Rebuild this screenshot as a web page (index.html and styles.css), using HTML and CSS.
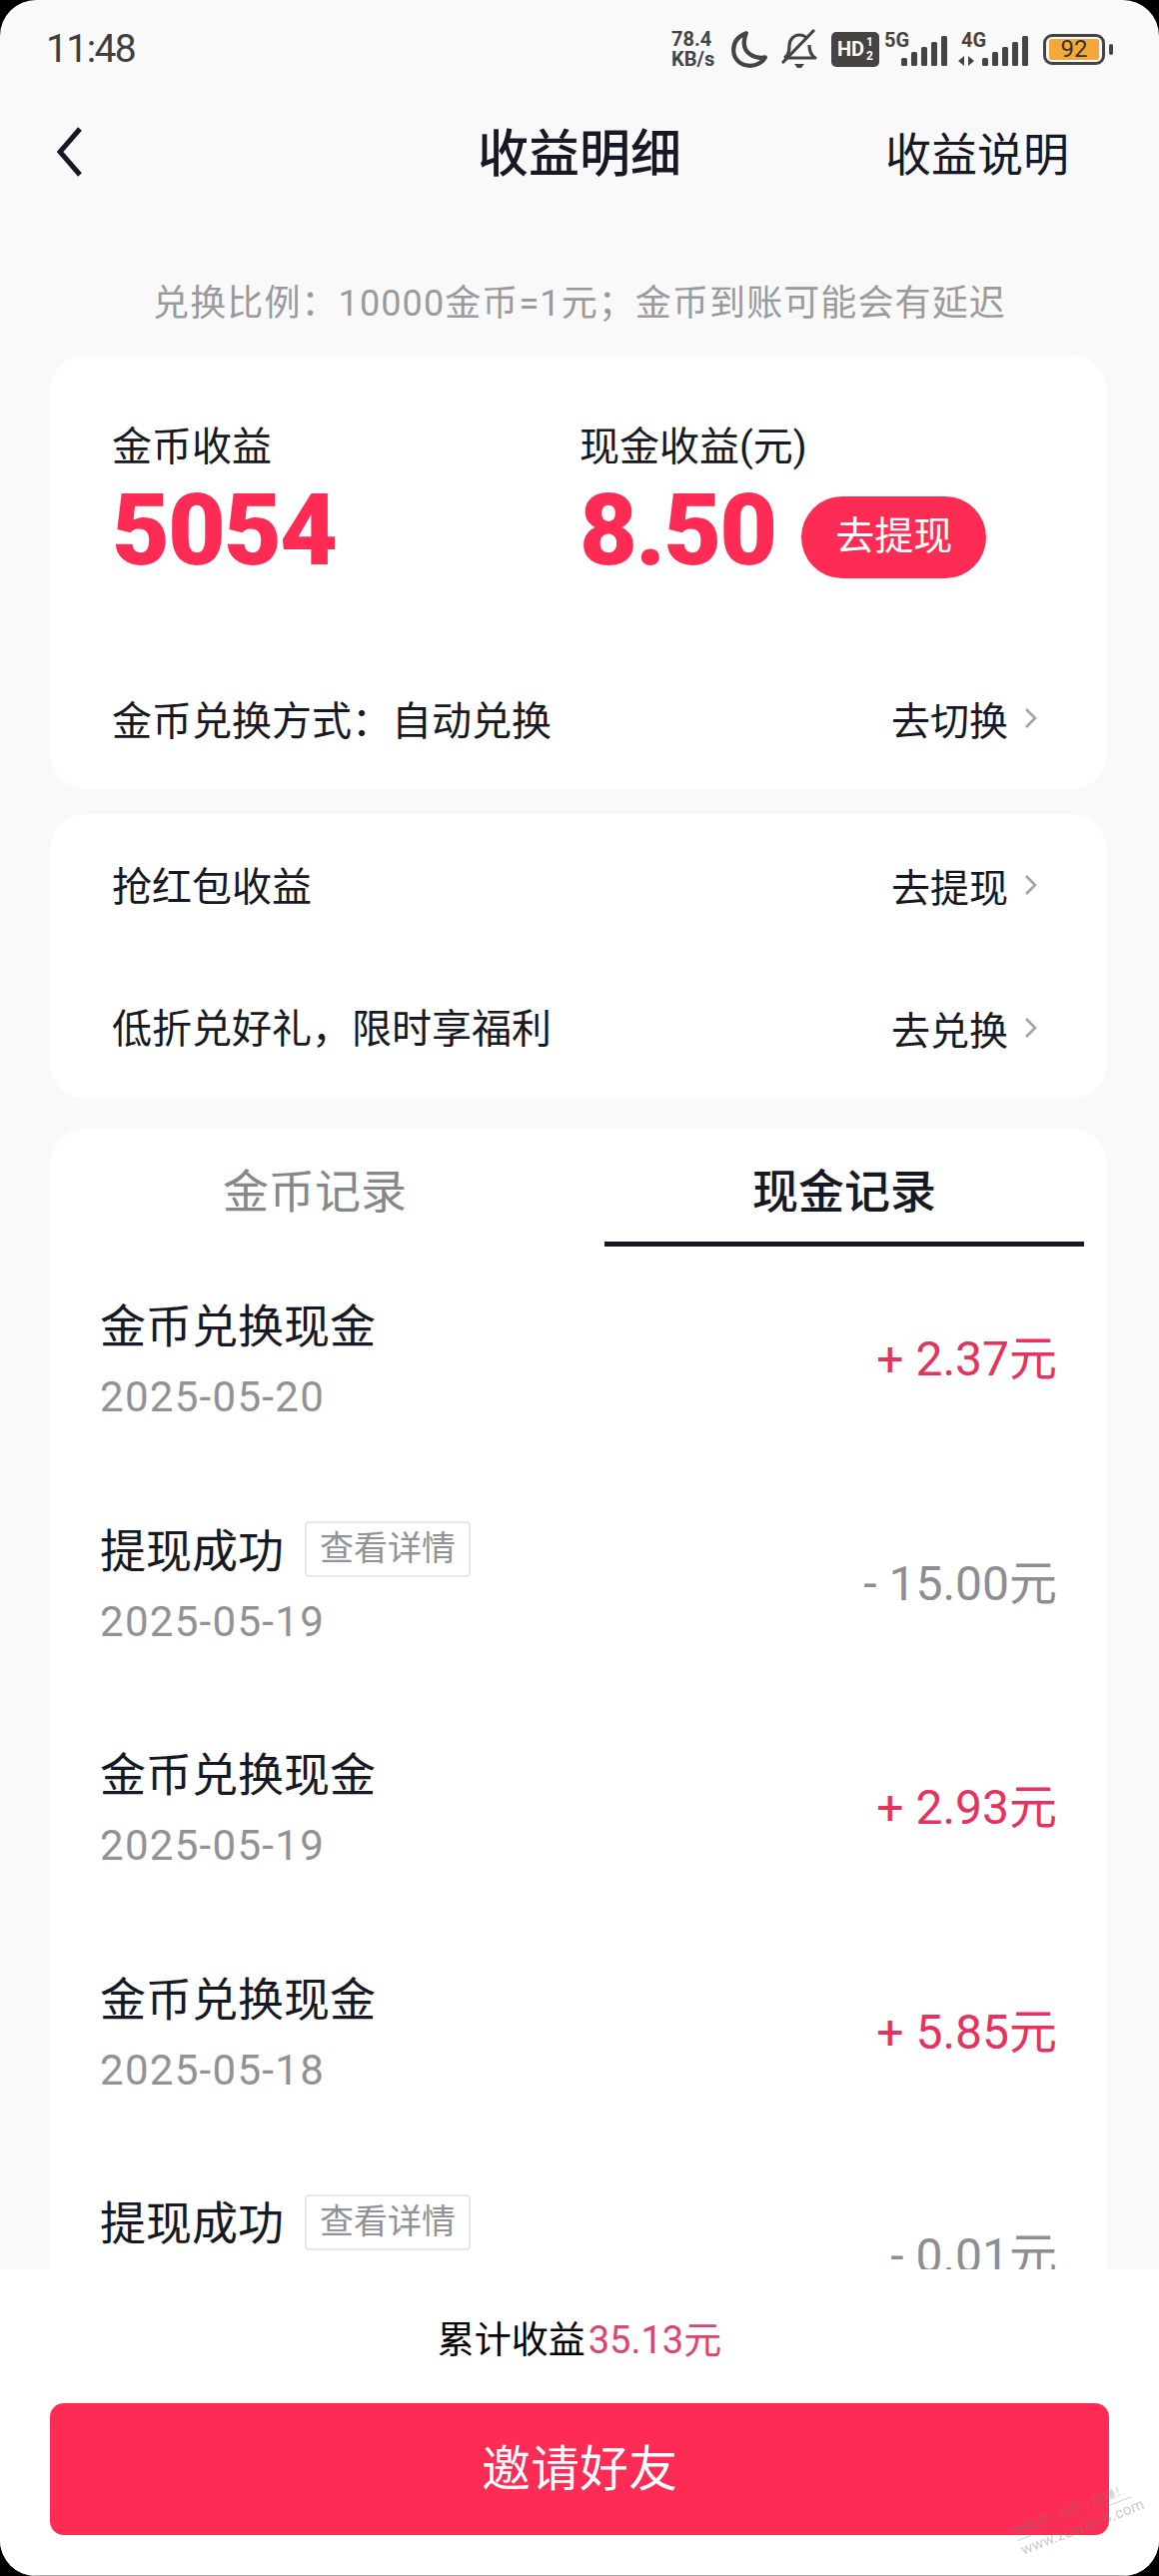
FILE: index.html
```html
<!DOCTYPE html>
<html lang="zh-CN">
<head>
    <meta charset="UTF-8">
    <meta name="viewport" content="width=device-width, initial-scale=1.0">
    <title>收益明细</title>
    <link rel="stylesheet" href="styles.css">
</head>
<body>
    <div class="screen">
        <div class="status-bar">
            <span class="time">11:48</span>
            <div class="status-icons">
                <span class="speed">78.4<br>KB/s</span>
                <svg class="icon-moon" width="38" height="38" viewBox="0 0 36 36">
                    <path d="M15 3 C7 6 3 12 3 19 C3 28 10 34 19 34 C25 34 31 30 33 26 C23 28 13 22 13 12 C13 9 14 6 15 3 Z" fill="none" stroke="#444" stroke-width="4" stroke-linejoin="round"/>
                </svg>
                <svg class="icon-bell" width="38" height="40" viewBox="0 0 38 40">
                    <path d="M4 29 C9 26 9 21 9 17 C9 10 14 6 19 6 C22 6 25 7 27 10 M29 16 C29 21 30 26 35 29 L4 29" fill="none" stroke="#444" stroke-width="3.2" stroke-linejoin="round"/>
                    <path d="M3 33 L33 2" stroke="#444" stroke-width="3.2" stroke-linecap="round"/>
                    <path d="M14 35 H24 L21 39 H17 Z" fill="#444"/>
                </svg>
                <span class="hd-badge">HD<span class="hd-frac">1<br>2</span></span>
                <div class="signal signal-5g">
                    <span class="net">5G</span>
                    <svg width="46" height="30" viewBox="0 0 46 30">
                        <g fill="#444">
                            <rect x="0" y="22" width="6" height="8" rx="1.5"/>
                            <rect x="10" y="16" width="6" height="14" rx="1.5"/>
                            <rect x="20" y="11" width="6" height="19" rx="1.5"/>
                            <rect x="30" y="6" width="6" height="24" rx="1.5"/>
                            <rect x="40" y="0" width="6" height="30" rx="1.5"/>
                        </g>
                    </svg>
                </div>
                <div class="signal signal-4g">
                    <span class="net">4G</span>
                    <svg class="updown" width="16" height="10" viewBox="0 0 16 10">
                        <path d="M6 0 V10 L0 5 Z M10 0 V10 L16 5 Z" fill="#444"/>
                    </svg>
                    <svg width="46" height="30" viewBox="0 0 46 30">
                        <g fill="#444">
                            <rect x="0" y="22" width="6" height="8" rx="1.5"/>
                            <rect x="10" y="16" width="6" height="14" rx="1.5"/>
                            <rect x="20" y="11" width="6" height="19" rx="1.5"/>
                            <rect x="30" y="6" width="6" height="24" rx="1.5"/>
                            <rect x="40" y="0" width="6" height="30" rx="1.5"/>
                        </g>
                    </svg>
                </div>
                <div class="battery">
                    <span class="battery-level">92</span>
                </div>
                <span class="battery-nub"></span>
            </div>
        </div>

        <div class="nav">
            <svg class="back" width="26" height="50" viewBox="0 0 26 50">
                <path d="M23 2 L3 25 L23 48" fill="none" stroke="#161823" stroke-width="5"/>
            </svg>
            <span class="nav-title">收益明细</span>
            <span class="nav-link">收益说明</span>
        </div>

        <p class="notice">兑换比例：10000金币=1元；金币到账可能会有延迟</p>

        <div class="card summary-card">
            <div class="earnings">
                <div class="earning">
                    <div class="earning-label">金币收益</div>
                    <div class="earning-value">5054</div>
                </div>
                <div class="earning">
                    <div class="earning-label">现金收益(元)</div>
                    <div class="earning-line">
                        <div class="earning-value">8.50</div>
                        <span class="withdraw">去提现</span>
                    </div>
                </div>
            </div>
            <div class="link-row">
                <span>金币兑换方式：自动兑换</span>
                <span class="link-action">去切换<svg class="arrow" width="13" height="22" viewBox="0 0 13 22"><path d="M2 2 L11 11 L2 20" fill="none" stroke="#a3a3a6" stroke-width="2.6"/></svg></span>
            </div>
        </div>

        <div class="card links-card">
            <div class="link-row">
                <span>抢红包收益</span>
                <span class="link-action">去提现<svg class="arrow" width="13" height="22" viewBox="0 0 13 22"><path d="M2 2 L11 11 L2 20" fill="none" stroke="#a3a3a6" stroke-width="2.6"/></svg></span>
            </div>
            <div class="link-row">
                <span>低折兑好礼，限时享福利</span>
                <span class="link-action">去兑换<svg class="arrow" width="13" height="22" viewBox="0 0 13 22"><path d="M2 2 L11 11 L2 20" fill="none" stroke="#a3a3a6" stroke-width="2.6"/></svg></span>
            </div>
        </div>

        <div class="card records-card">
            <div class="tabs">
                <div class="tab">金币记录</div>
                <div class="tab active">现金记录</div>
            </div>

            <div class="record">
                <div>
                    <div class="record-title">金币兑换现金</div>
                    <div class="record-date">2025-05-20</div>
                </div>
                <div class="amount plus">+ 2.37元</div>
            </div>
            <div class="record">
                <div>
                    <div class="record-title">提现成功<span class="detail-tag">查看详情</span></div>
                    <div class="record-date">2025-05-19</div>
                </div>
                <div class="amount">- 15.00元</div>
            </div>
            <div class="record">
                <div>
                    <div class="record-title">金币兑换现金</div>
                    <div class="record-date">2025-05-19</div>
                </div>
                <div class="amount plus">+ 2.93元</div>
            </div>
            <div class="record">
                <div>
                    <div class="record-title">金币兑换现金</div>
                    <div class="record-date">2025-05-18</div>
                </div>
                <div class="amount plus">+ 5.85元</div>
            </div>
            <div class="record">
                <div>
                    <div class="record-title">提现成功<span class="detail-tag">查看详情</span></div>
                    <div class="record-date"></div>
                </div>
                <div class="amount">- 0.01元</div>
            </div>
        </div>

        <div class="footer">
            <div class="total">累计收益<span class="total-value">35.13元</span></div>
            <div class="invite">邀请好友</div>
        </div>

        <div class="watermark">
            <div class="watermark-name">赚客吧，有你一起赚！</div>
            <div class="watermark-url">www.zuanke8.com</div>
        </div>
    </div>
</body>
</html>
```

FILE: styles.css
```css
* {
    margin: 0;
    padding: 0;
    box-sizing: border-box;
    font-family: Roboto, 'Noto Sans CJK SC', sans-serif;
}

body {
    background-color: #000;
    width: 1160px;
    height: 2579px;
    overflow: hidden;
}

.screen {
    position: relative;
    width: 1160px;
    height: 2579px;
    background-color: #f9f9fa;
    border-radius: 36px;
    overflow: hidden;
    color: #161823;
}

/* status bar */
.status-bar {
    height: 96px;
    padding: 2px 46px 0;
    display: flex;
    justify-content: space-between;
    align-items: center;
}

.time {
    font-size: 39px;
    color: #3f3f3f;
    letter-spacing: -1.6px;
}

.status-icons {
    display: flex;
    align-items: center;
    height: 40px;
}

.speed {
    width: 52px;
    font-size: 20px;
    line-height: 20px;
    font-weight: 700;
    color: #444;
}

.icon-moon {
    margin-left: 7px;
}

.icon-bell {
    margin-left: 12px;
}

.hd-badge {
    display: flex;
    align-items: center;
    justify-content: center;
    width: 48px;
    height: 35px;
    margin-left: 13px;
    background-color: #444;
    border-radius: 5px;
    color: #fff;
    font-size: 20px;
    font-weight: 700;
}

.hd-frac {
    font-size: 12px;
    line-height: 14px;
    margin-left: 2px;
}

.signal {
    position: relative;
    display: flex;
    align-items: flex-end;
    height: 34px;
}

.signal-5g {
    margin-left: 22px;
}

.signal-4g {
    margin-left: 35px;
}

.net {
    position: absolute;
    left: -17px;
    top: -1px;
    font-size: 20px;
    line-height: 18px;
    font-weight: 700;
    color: #444;
}

.signal-4g .net {
    left: -21px;
}

.updown {
    position: absolute;
    left: -24px;
    bottom: 0;
}

.battery {
    width: 62px;
    height: 31px;
    margin-left: 15px;
    padding: 2px 3px;
    border: 3px solid #444;
    border-radius: 9px;
}

.battery-level {
    display: block;
    width: 50px;
    height: 21px;
    background-color: #f4a83c;
    border-radius: 2px;
    text-align: center;
    font-size: 24px;
    line-height: 21px;
    color: #333;
}

.battery-nub {
    width: 4px;
    height: 11px;
    margin-left: 4px;
    background-color: #444;
    border-radius: 2px;
}

/* nav */
.nav {
    height: 112px;
    padding: 0 90px;
    display: grid;
    grid-template-columns: 1fr auto 1fr;
    align-items: center;
}

.back {
    margin-left: -33px;
}

.nav-title {
    margin-bottom: 5px;
    font-size: 51px;
    font-weight: 500;
}

.nav-link {
    justify-self: end;
    margin-bottom: 3px;
    font-size: 46px;
}

.notice {
    padding: 71px 0 26px;
    font-size: 36px;
    line-height: 50px;
    letter-spacing: 1.1px;
    text-align: center;
    color: #9a9a9e;
}

.card {
    margin: 0 52px 0 50px;
    background-color: #fff;
    border-radius: 36px;
}

/* top card */
.summary-card {
    height: 435px;
    padding-top: 68px;
}

.earnings {
    display: grid;
    grid-template-columns: 468px 1fr;
    padding-left: 62px;
    height: 225px;
}

.earning-label {
    font-size: 40px;
    line-height: 50px;
}

.earning-value {
    margin-top: 3px;
    font-size: 100px;
    line-height: 110px;
    font-weight: 900;
    letter-spacing: -2px;
    color: #fe2c55;
}

.earning-line {
    display: flex;
    align-items: center;
}

.withdraw {
    width: 185px;
    height: 82px;
    margin: 17px 0 0 26px;
    background-color: #fe2c55;
    border-radius: 41px;
    color: #fff;
    font-size: 39px;
    line-height: 80px;
    text-align: center;
}

.link-row {
    height: 142.5px;
    padding: 0 70px 0 62px;
    display: flex;
    justify-content: space-between;
    align-items: center;
    font-size: 40px;
}

.links-card .link-row span:first-child {
    margin-bottom: 3px;
}

.link-action {
    display: flex;
    align-items: center;
    font-size: 39px;
}

.arrow {
    margin-left: 16px;
}

.links-card {
    height: 285px;
    margin-top: 25px;
}

/* records */
.records-card {
    height: 1400px;
    margin-top: 30px;
}

.tabs {
    height: 120px;
    display: grid;
    grid-template-columns: 530px 480px;
    column-gap: 25px;
}

.tab {
    font-size: 46px;
    line-height: 127px;
    text-align: center;
    color: #86878b;
}

.tab.active {
    color: #161823;
    font-weight: 500;
    border-bottom: 5px solid #161823;
    height: 118px;
}

.record {
    height: 224.5px;
    padding: 0 50px;
    display: flex;
    justify-content: space-between;
    align-items: center;
}

.record-title {
    display: flex;
    align-items: center;
    height: 71px;
    padding-bottom: 5px;
    font-size: 46px;
}

.record-date {
    height: 71px;
    font-size: 42px;
    line-height: 73px;
    letter-spacing: 1.3px;
    color: #929296;
}

.detail-tag {
    width: 166px;
    height: 56px;
    margin: 5px 0 0 21px;
    border: 2px solid #e8e8ea;
    border-radius: 4px;
    font-size: 34px;
    line-height: 50px;
    text-align: center;
    color: #929296;
}

.amount {
    margin-bottom: 12px;
    font-size: 48px;
    color: #8e8e92;
}

.amount.plus {
    color: #e6325e;
}

/* footer */
.footer {
    position: absolute;
    left: 0;
    right: 0;
    bottom: 0;
    height: 307px;
    padding: 41px 50px 0;
    background-color: #fff;
    border-bottom: 1px solid #aaa;
}

.total {
    font-size: 37px;
    line-height: 60px;
    text-align: center;
    color: #000;
}

.total-value {
    margin-left: 3px;
    font-size: 38px;
    color: #dd4470;
}

.invite {
    height: 132px;
    margin-top: 32px;
    background-color: #fe2c55;
    border-radius: 14px;
    color: #fff;
    font-size: 49px;
    line-height: 134px;
    text-align: center;
}

.watermark {
    position: absolute;
    left: 1015px;
    top: 2503px;
    width: 122px;
    color: rgba(120, 120, 120, 0.4);
    transform: rotate(-21deg);
    white-space: nowrap;
}

.watermark-name {
    font-size: 12px;
    line-height: 18px;
    border-bottom: 1px solid rgba(120, 120, 120, 0.3);
}

.watermark-url {
    font-size: 15px;
    line-height: 20px;
    letter-spacing: 0.3px;
}
```
